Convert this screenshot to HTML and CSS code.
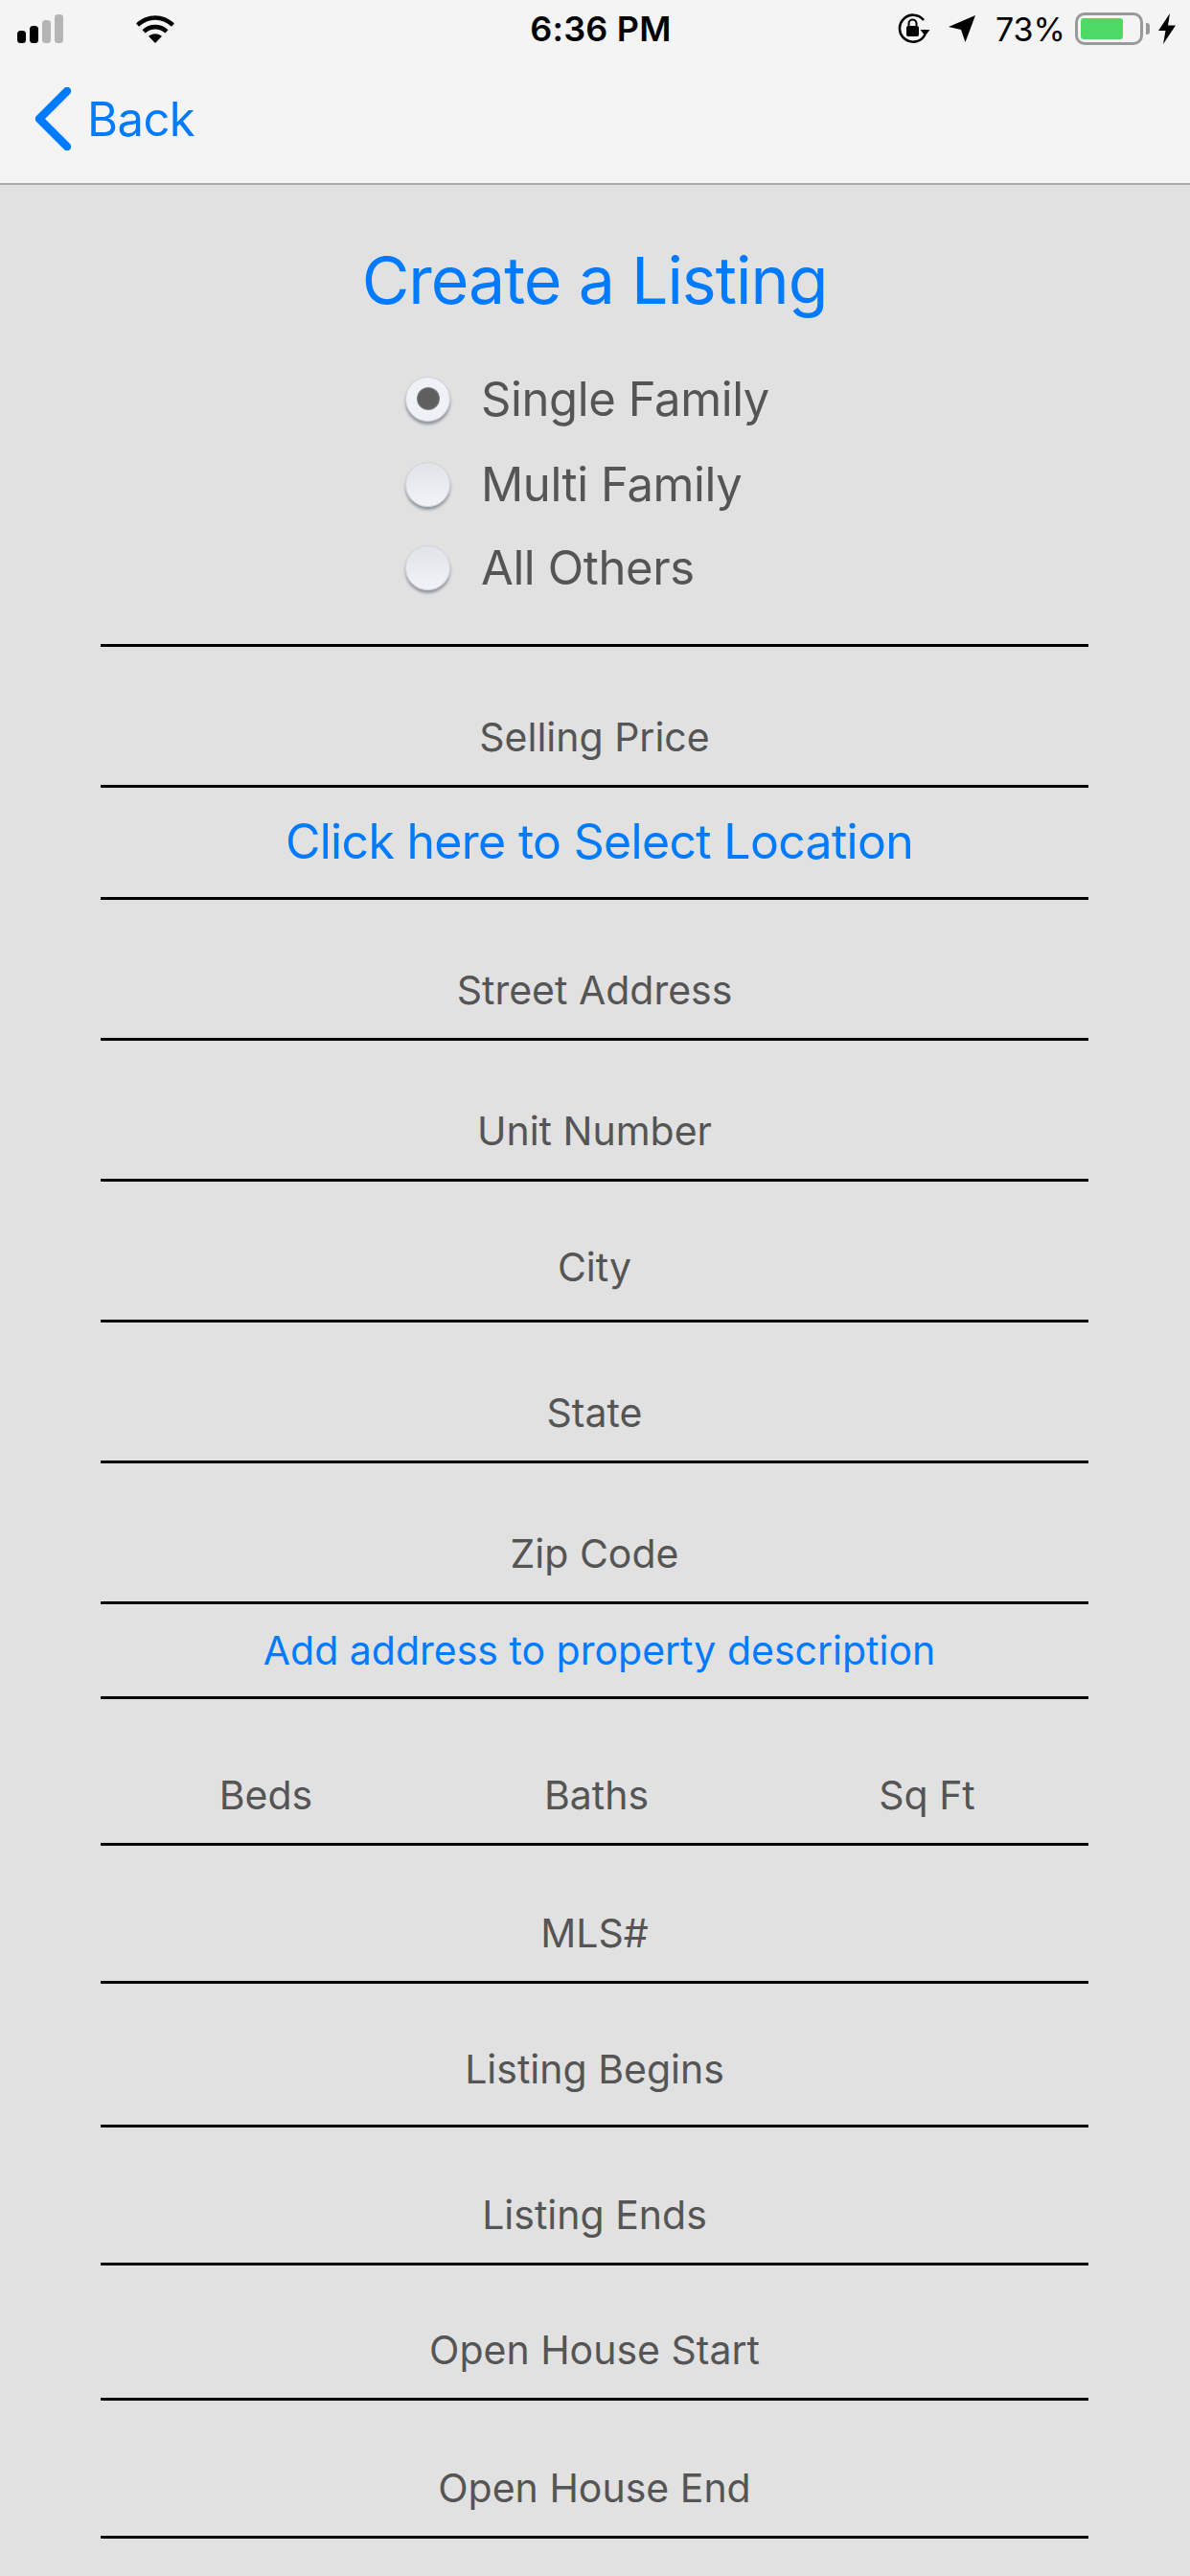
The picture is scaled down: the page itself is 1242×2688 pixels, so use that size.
FILE: index.html
```html
<!DOCTYPE html>
<html>

<head>
	<link rel="stylesheet" href="styles.css">
</head>

<body>
	<div class="top-bar">
		<div class="status-bar">
			<div class="status-left">
				<svg class="signal" width="48" height="30" viewBox="0 0 48 30">
					<rect x="0" y="17" width="9" height="13" rx="3.5" fill="#000" />
					<rect x="13" y="12" width="9" height="18" rx="3.5" fill="#000" />
					<rect x="26" y="6" width="9" height="24" rx="3.5" fill="#b5b5b5" />
					<rect x="39" y="0" width="9" height="30" rx="3.5" fill="#b5b5b5" />
				</svg>
				<svg class="wifi" width="42" height="30" viewBox="0 0 42 30">
					<path d="M1 9.500C12.500 -1.500 29.500 -1.500 41 9.500L38 12.700C28 3.500 14 3.500 4 12.700Z" fill="#000" />
					<path d="M7.500 16.200C15 9 27 9 34.500 16.200L31.300 19.500C25.500 14.300 16.500 14.300 10.700 19.500Z" fill="#000" />
					<path d="M14 22.800C18 19.300 24 19.300 28 22.800L21 30Z" fill="#000" />
				</svg>
			</div>
			<div class="status-time">6:36 PM</div>
			<div class="status-right">
				<svg class="lock-rotate" width="34" height="32" viewBox="0 0 34 32">
					<path d="M28.500 22A14 14 0 1 1 27 7" fill="none" stroke="#000" stroke-width="2.600" />
					<path d="M23.500 17L33.500 17L28.500 23.500Z" fill="#000" />
					<rect x="9" y="13" width="13" height="11" rx="2" fill="#000" />
					<path d="M11.500 13V10.500A4 4 0 0 1 19.500 10.500V13" fill="none" stroke="#000" stroke-width="2" />
				</svg>
				<svg class="arrow" width="28" height="28" viewBox="0 0 28 28">
					<path d="M28 0L17.500 28L13 15L0 12Z" fill="#000" />
				</svg>
				<div class="status-pct">73%</div>
				<div class="battery">
					<div class="battery-fill"></div>
				</div>
				<div class="battery-nub"></div>
				<svg class="bolt" width="18" height="32" viewBox="0 0 18 32">
					<path d="M12 0L0 18H7.500L5 32L18 12.500H10Z" fill="#000" />
				</svg>
			</div>
		</div>

		<div class="nav-bar">
			<svg class="back-icon" width="40" height="66" viewBox="0 0 40 66">
				<path d="M34 4L5 33L34 62" fill="none" stroke="#007aff" stroke-width="8.500" stroke-linecap="round" stroke-linejoin="round" />
			</svg>
			<div class="back-text">Back</div>
		</div>
	</div>

	<div class="content">
		<h1>Create a Listing</h1>

		<div class="radio-group">
			<div class="radio-row">
				<span class="radio checked"></span>
				<span class="radio-label">Single Family</span>
			</div>
			<div class="radio-row">
				<span class="radio"></span>
				<span class="radio-label">Multi Family</span>
			</div>
			<div class="radio-row">
				<span class="radio"></span>
				<span class="radio-label">All Others</span>
			</div>
		</div>

		<div class="form">
			<div class="field h147">Selling Price</div>
			<div class="link-row big">Click here to Select Location</div>
			<div class="field h147">Street Address</div>
			<div class="field h147">Unit Number</div>
			<div class="field h147 raised">City</div>
			<div class="field h147">State</div>
			<div class="field h147">Zip Code</div>
			<div class="link-row small">Add address to property description</div>
			<div class="field triple">
				<span>Beds</span>
				<span>Baths</span>
				<span>Sq Ft</span>
			</div>
			<div class="field h144">MLS#</div>
			<div class="field h150 raised-more">Listing Begins</div>
			<div class="field h144">Listing Ends</div>
			<div class="field h141">Open House Start</div>
			<div class="field h144">Open House End</div>
		</div>
	</div>
</body>

</html>
```

FILE: styles.css
```css
* {
	box-sizing: border-box;
	margin: 0;
	padding: 0;
	font-family: Inter, 'Noto Sans', sans-serif;
}

body {
	background: #e1e1e1;
	width: 1242px;
	height: 2688px;
	overflow: hidden;
}

/* Status bar and nav */
.top-bar {
	height: 193px;
	background: #f4f4f4;
	border-bottom: 2px solid #aaa;
}

.status-bar {
	height: 60px;
	display: flex;
	align-items: center;
	padding: 0 15px 0 18px;
}

.status-left {
	flex: 1;
	display: flex;
	align-items: center;
	gap: 75px;
}

.status-time {
	font-size: 36px;
	font-weight: 600;
	letter-spacing: 0.2px;
	color: #000;
	margin-left: 9px;
}

.status-right {
	flex: 1;
	display: flex;
	align-items: center;
	justify-content: flex-end;
}

.lock-rotate {
	margin-right: 19px;
}

.arrow {
	margin-right: 21px;
}

.status-pct {
	font-size: 34px;
	color: #000;
	margin-right: 10px;
}

.battery {
	width: 71px;
	height: 34px;
	border: 3px solid #999;
	border-radius: 10px;
	padding: 3px;
}

.battery-fill {
	width: 44px;
	height: 22px;
	background: #4cd964;
	border-radius: 3px;
}

.battery-nub {
	width: 4px;
	height: 12px;
	background: #999;
	border-radius: 0 3px 3px 0;
	margin: 0 9px 0 3px;
}

.nav-bar {
	height: 131px;
	display: flex;
	align-items: center;
	padding: 0 0 4px 36px;
}

.back-icon {
	width: 40px;
	height: 66px;
	margin-right: 15px;
}

.back-text {
	font-size: 49px;
	letter-spacing: -0.6px;
	padding-top: 2px;
	color: #007aff;
}

/* Page */
.content {
	padding: 0 106px 0 105px;
}

h1 {
	height: 178px;
	padding-top: 58px;
	text-align: center;
	font-size: 68px;
	font-weight: 400;
	letter-spacing: -1px;
	line-height: 82px;
	color: #007aff;
}

.radio-group {
	height: 304px;
	border-bottom: 3px solid #000;
	padding-left: 318px;
}

.radio-row {
	display: flex;
	align-items: center;
	gap: 32px;
	height: 90px;
}

.radio-row:nth-child(2) {
	height: 88px;
}

.radio-row:nth-child(3) {
	height: 86px;
}

.radio {
	width: 47px;
	height: 47px;
	border-radius: 50%;
	background: linear-gradient(#e0e3e8, #f0f3f7);
	border: 1px solid #cfd3d8;
	box-shadow: 0 3px 3px rgba(90, 100, 115, 0.6);
	display: flex;
	align-items: center;
	justify-content: center;
}

.radio.checked {
	background: #eef1f5;
}

.radio.checked::before {
	content: "";
	width: 24px;
	height: 24px;
	border-radius: 50%;
	background: radial-gradient(#5f5f5f 60%, rgba(95, 95, 95, 0) 100%);
}

.radio-label {
	font-size: 49px;
	letter-spacing: -0.4px;
	color: #555;
}

.form {
	display: flex;
	flex-direction: column;
}

.field {
	display: flex;
	align-items: flex-end;
	justify-content: center;
	padding-bottom: 26px;
	border-bottom: 3px solid #000;
	font-size: 41px;
	line-height: 48px;
	color: #555;
}

.field.raised {
	padding-bottom: 31px;
}

.field.raised-more {
	padding-bottom: 34px;
}

.h147 {
	height: 147px;
}

.h150 {
	height: 150px;
}

.h144 {
	height: 144px;
}

.h141 {
	height: 141px;
}

.link-row {
	display: flex;
	align-items: center;
	justify-content: center;
	border-bottom: 3px solid #000;
	color: #007aff;
	padding-left: 10px;
}

.link-row.big {
	height: 117px;
	font-size: 50px;
	letter-spacing: -0.7px;
	padding-bottom: 3px;
}

.link-row.small {
	height: 99px;
	font-size: 41px;
}

.field.triple {
	height: 153px;
	display: grid;
	grid-template-columns: repeat(3, 345px);
	justify-content: start;
	text-align: center;
}
```
